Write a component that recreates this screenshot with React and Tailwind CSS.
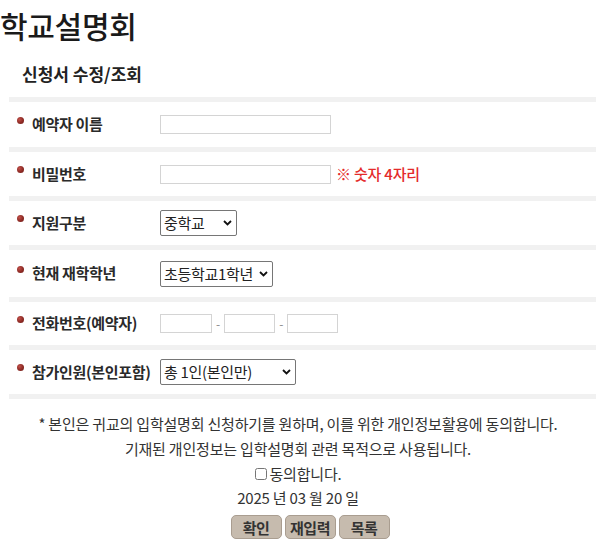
import React, { useState } from "react";

const FONT = { fontFamily: '"Noto Sans CJK KR", "Noto Sans", sans-serif' };

const Bullet = () => (
  <span
    className="mt-[-9px] mr-[8px] inline-block h-[7px] w-[7px] shrink-0 rounded-full"
    style={{ background: "radial-gradient(circle at 35% 35%, #c0504a 0%, #8e2a24 55%, #6a1c18 100%)" }}
  />
);

const Row = ({ label, h, children }) => (
  <>
    <div className={`flex items-center ${h}`}>
      <div className="flex w-[151px] shrink-0 items-center pl-[8px]">
        <Bullet />
        <span className="text-[15px] font-bold tracking-[-0.3px] text-[#2a2a2a]">{label}</span>
      </div>
      <div className="flex items-center">{children}</div>
    </div>
    <div className="h-[5px] bg-[#f1f1f1]" />
  </>
);

const Text = ({ w }) => (
  <input type="text" className={`h-[19px] ${w} border border-[#d4d4d4] bg-white px-1 text-[13px] outline-none`} />
);

const Select = ({ w, children }) => (
  <div className={`relative h-[26px] ${w}`}>
    <select
      className="h-full w-full appearance-none rounded-[2px] border border-[#767676] bg-white pl-[3px] text-[15px] tracking-[-0.3px] text-[#222] outline-none"
      style={FONT}
    >
      {children}
    </select>
    <svg
      className="pointer-events-none absolute right-[5px] top-[10px] h-[6px] w-[9px]"
      viewBox="0 0 9 6"
      fill="none"
      stroke="#111"
      strokeWidth="1.8"
    >
      <path d="M1 1l3.5 3.5L8 1" />
    </svg>
  </div>
);

export default function App() {
  const [agree, setAgree] = useState(false);

  return (
    <div className="min-h-screen bg-white text-[#333]" style={FONT}>
      <h1 className="pt-[4px] text-[30px] font-medium leading-[42px] tracking-[-0.3px] text-[#1a1a1a]">학교설명회</h1>
      <h2 className="pl-[22px] pt-[16px] text-[17px] font-bold leading-[24px] text-[#222]">신청서 수정/조회</h2>

      <div className="ml-[9px] mt-[11px]">
        <div className="h-[5px] bg-[#f1f1f1]" />
        <Row label="예약자 이름" h="h-[45px]">
          <Text w="w-[171px]" />
        </Row>
        <Row label="비밀번호" h="h-[44px]">
          <Text w="w-[171px]" />
          <span className="ml-[5px] text-[15px] font-medium tracking-[-0.2px] text-[#e42b2b]">※ 숫자 4자리</span>
        </Row>
        <Row label="지원구분" h="h-[44px]">
          <Select w="w-[77px]">
            <option>중학교</option>
            <option>고등학교</option>
          </Select>
        </Row>
        <Row label="현재 재학학년" h="h-[47px]">
          <Select w="w-[113px]">
            <option>초등학교1학년</option>
          </Select>
        </Row>
        <Row label="전화번호(예약자)" h="h-[43px]">
          <Text w="w-[52px]" />
          <span className="mx-[4px] text-[12px] text-[#888]">-</span>
          <Text w="w-[51px]" />
          <span className="mx-[4px] text-[12px] text-[#888]">-</span>
          <Text w="w-[51px]" />
        </Row>
        <Row label="참가인원(본인포함)" h="h-[44px]">
          <Select w="w-[136px]">
            <option>총 1인(본인만)</option>
            <option>총 2인</option>
          </Select>
        </Row>
      </div>

      <div className="mt-[12px] flex flex-col items-center text-[15px] leading-[25px] tracking-[-0.2px] text-[#333]">
        <p>* 본인은 귀교의 입학설명회 신청하기를 원하며, 이를 위한 개인정보활용에 동의합니다.</p>
        <p>기재된 개인정보는 입학설명회 관련 목적으로 사용됩니다.</p>
        <label className="flex items-center gap-[3px]">
          <input
            type="checkbox"
            checked={agree}
            onChange={() => setAgree(!agree)}
            className="h-[12px] w-[12px]"
          />
          동의합니다.
        </label>
        <p className="mt-[-1px]">2025 년 03 월 20 일</p>
        <div className="ml-[24px] mt-[5px] flex gap-[3px]">
          {["확인", "재입력", "목록"].map((t) => (
            <button
              key={t}
              type="button"
              className="h-[24px] w-[51px] rounded-[5px] border border-[#a99d90] bg-[#c6bbae] text-[15px] font-bold leading-none tracking-[-0.5px] text-[#333]"
            >
              {t}
            </button>
          ))}
        </div>
      </div>
    </div>
  );
}
